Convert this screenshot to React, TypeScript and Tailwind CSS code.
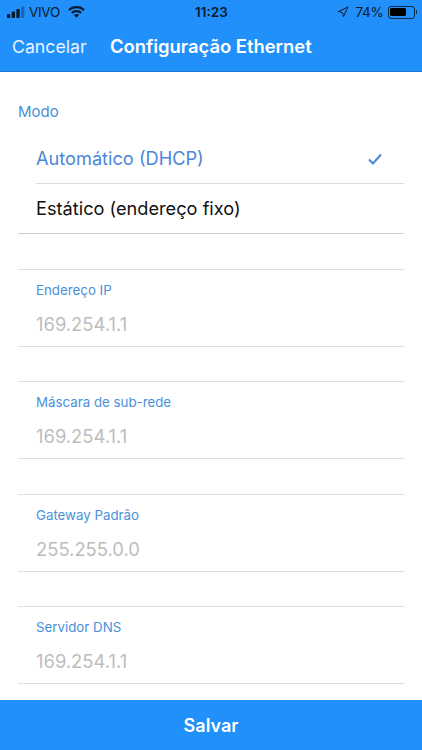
import React from 'react';
import { LuNavigation } from 'react-icons/lu';

const fields = [
  { label: 'Endereço IP', value: '169.254.1.1' },
  { label: 'Máscara de sub-rede', value: '169.254.1.1' },
  { label: 'Gateway Padrão', value: '255.255.0.0' },
  { label: 'Servidor DNS', value: '169.254.1.1' },
];

const Signal = () => (
  <svg width="19" height="12" viewBox="0 0 19 12" fill="currentColor">
    <rect x="0" y="8" width="3.300" height="4" rx="0.8" />
    <rect x="4.700" y="5.500" width="3.300" height="6.500" rx="0.8" />
    <rect x="9.400" y="3" width="3.300" height="9" rx="0.8" />
    <rect x="14.100" y="0.500" width="3.300" height="11.500" rx="0.8" opacity="0.35" />
  </svg>
);

const Wifi = () => (
  <svg width="17" height="12" viewBox="0 0 17 12" fill="currentColor">
    <path d="M8.5 0C5.3 0 2.4 1.2 0.2 3.3L1.7 4.9C3.5 3.2 5.9 2.2 8.5 2.2s5 1 6.8 2.7l1.5-1.6C14.6 1.2 11.7 0 8.5 0z" />
    <path d="M8.5 4C6.4 4 4.5 4.8 3.1 6.2l1.5 1.6C5.6 6.8 7 6.2 8.5 6.2s2.900 0.6 3.900 1.600l1.500-1.600C12.500 4.800 10.600 4 8.500 4z" />
    <path d="M8.500 8C7.500 8 6.700 8.400 6 9l2.500 2.800L11 9c-0.700-0.600-1.500-1-2.500-1z" />
  </svg>
);

const Battery = () => (
  <div className="flex items-center">
    <div className="h-[13px] w-[27px] rounded-[3px] border border-black/70 p-[1.5px]">
      <div className="h-full w-[74%] rounded-[1.5px] bg-black" />
    </div>
    <div className="ml-[1px] h-[4px] w-[1.5px] rounded-r-sm bg-black/70" />
  </div>
);

export default function App() {
  return (
    <div className="flex h-[750px] w-[422px] flex-col overflow-hidden bg-white font-['Inter','Liberation_Sans',sans-serif]">
      <header className="h-[72px] shrink-0 border-b border-[#1c78d6] bg-[#2190fb]">
        <div className="flex h-[24px] items-center justify-between pl-[7px] pr-[5px] text-[#0b1a2b]">
          <div className="flex w-[160px] items-center gap-[4px]">
            <Signal />
            <span className="-ml-[1px] w-[34px] text-[13.5px] tracking-[-0.3px]">VIVO</span>
            <span className="ml-[1px]"><Wifi /></span>
          </div>
          <span className="mr-auto ml-[28px] text-[13.5px] font-semibold">11:23</span>
          <div className="flex items-center gap-[4px]">
            <LuNavigation className="mr-[3px] text-[12px]" />
            <span className="text-[13.5px] tracking-[-0.3px]">74%</span>
            <Battery />
          </div>
        </div>
        <div className="flex h-[46px] items-center pl-[12px] text-white">
          <span className="w-[98px] text-[17.7px] leading-none text-white/90">Cancelar</span>
          <span className="-mt-[1px] text-[18.4px] font-semibold leading-none">Configuração Ethernet</span>
        </div>
      </header>

      <main className="flex-1 overflow-hidden px-[18px]">
        <div className="mt-[20px] flex h-[28px] items-end pb-[1px] pt-[20px] text-[15px] leading-none text-[#4a90d9]">Modo</div>
        <div className="pl-[18px]">
          <div className="mt-[15px] flex h-[49px] items-center justify-between border-b border-[#dcdcdc] pr-[22px] text-[18.2px] text-[#4a86d8]">
            <span>Automático (DHCP)</span>
            <svg width="14" height="12" viewBox="0 0 14 12" fill="none" stroke="#4a86d8" strokeWidth="2">
              <path d="M1 6.500 5 10.500 13 1.500" />
            </svg>
          </div>
        </div>
        <div className="flex h-[50px] items-center border-b border-[#cfcfcf] pl-[18px] pt-[1px] text-[18.2px] text-[#111]">
          Estático (endereço fixo)
        </div>

        <div className="pt-[0.6px]">
          {fields.map(f => (
            <div key={f.label} className="mt-[34.33px] h-[78px] border-y border-[#dedede] pl-[18px]">
              <div className="mt-[12px] text-[13.3px] leading-[16px] text-[#4a90d9]">{f.label}</div>
              <div className="mt-[15px] text-[18.4px] leading-[22px] text-[#bdbdbd]">{f.value}</div>
            </div>
          ))}
        </div>
      </main>

      <button className="flex h-[50px] shrink-0 items-center justify-center bg-[#2190fb] text-[18px] font-semibold text-white">
        Salvar
      </button>
    </div>
  );
}
